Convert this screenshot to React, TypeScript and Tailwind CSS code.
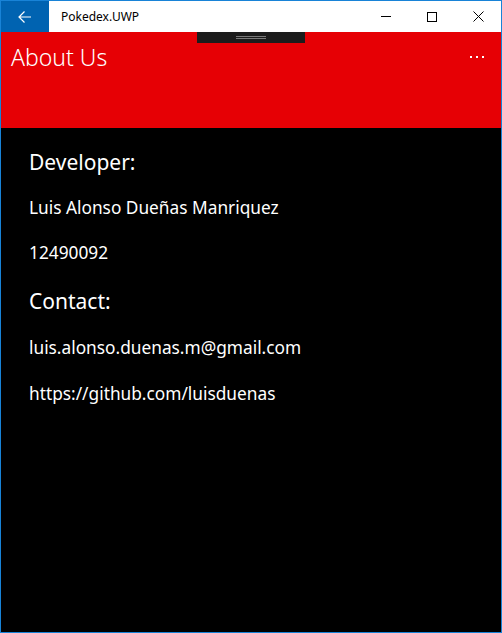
import React from "react";

const font = { fontFamily: '"Noto Sans", "Open Sans", sans-serif' };

const TitleBar = () => (
  <div className="flex h-[31px] bg-white">
    <div className="flex w-[48px] items-center justify-center bg-[#0063b1]">
      <svg width="14" height="12" viewBox="0 0 14 12" fill="none" stroke="white" strokeWidth="1.2">
        <path d="M13 6H1M6.5 0.5L1 6l5.5 5.5" />
      </svg>
    </div>
    <p className="ml-[12px] flex items-center text-[12px] text-black">Pokedex.UWP</p>
    <div className="ml-auto flex">
      <div className="flex w-[46px] items-center justify-center">
        <div className="h-px w-[10px] bg-black" />
      </div>
      <div className="flex w-[46px] items-center justify-center">
        <div className="h-[10px] w-[10px] border border-black" />
      </div>
      <div className="flex w-[46px] items-center justify-center">
        <svg width="11" height="11" viewBox="0 0 11 11" stroke="black" strokeWidth="1">
          <path d="M0.5 0.5l10 10M10.5 0.5l-10 10" />
        </svg>
      </div>
    </div>
  </div>
);

const Header = () => (
  <div className="relative flex h-[96px] items-start justify-between bg-[#e60005] pl-[10px] pr-[17px]">
    <div className="absolute left-[196px] top-0 flex h-[11px] w-[108px] flex-col items-center justify-center gap-[1px] bg-[#1c1c1c]">
      <div className="h-px w-[30px] bg-[#7a7a7a]" />
      <div className="h-px w-[30px] bg-[#7a7a7a]" />
    </div>
    <h1 className="mt-[10px] text-[23px] leading-[30px] font-light text-white">About Us</h1>
    <div className="mt-[24px] flex gap-[4px]">
      <span className="h-[2px] w-[2px] bg-white" />
      <span className="h-[2px] w-[2px] bg-white" />
      <span className="h-[2px] w-[2px] bg-white" />
    </div>
  </div>
);

const App = () => {
  return (
    <div className="h-[633px] w-[502px] border border-[#1883d7] bg-black" style={font}>
      <TitleBar />
      <Header />
      <div className="flex flex-col px-[28px] pt-[20px] text-white">
        <h2 className="text-[21px] leading-[28px]">Developer:</h2>
        <p className="mt-[20px] text-[17.3px] leading-[24px]">Luis Alonso Dueñas Manriquez</p>
        <p className="mt-[21px] text-[17.3px] leading-[24px]">12490092</p>
        <h2 className="mt-[22px] text-[21px] leading-[28px]">Contact:</h2>
        <p className="mt-[21px] text-[17.3px] leading-[24px]">luis.alonso.duenas.m@gmail.com</p>
        <p className="mt-[22px] text-[17.3px] leading-[24px]">https://github.com/luisduenas</p>
      </div>
    </div>
  );
};

export default App;
